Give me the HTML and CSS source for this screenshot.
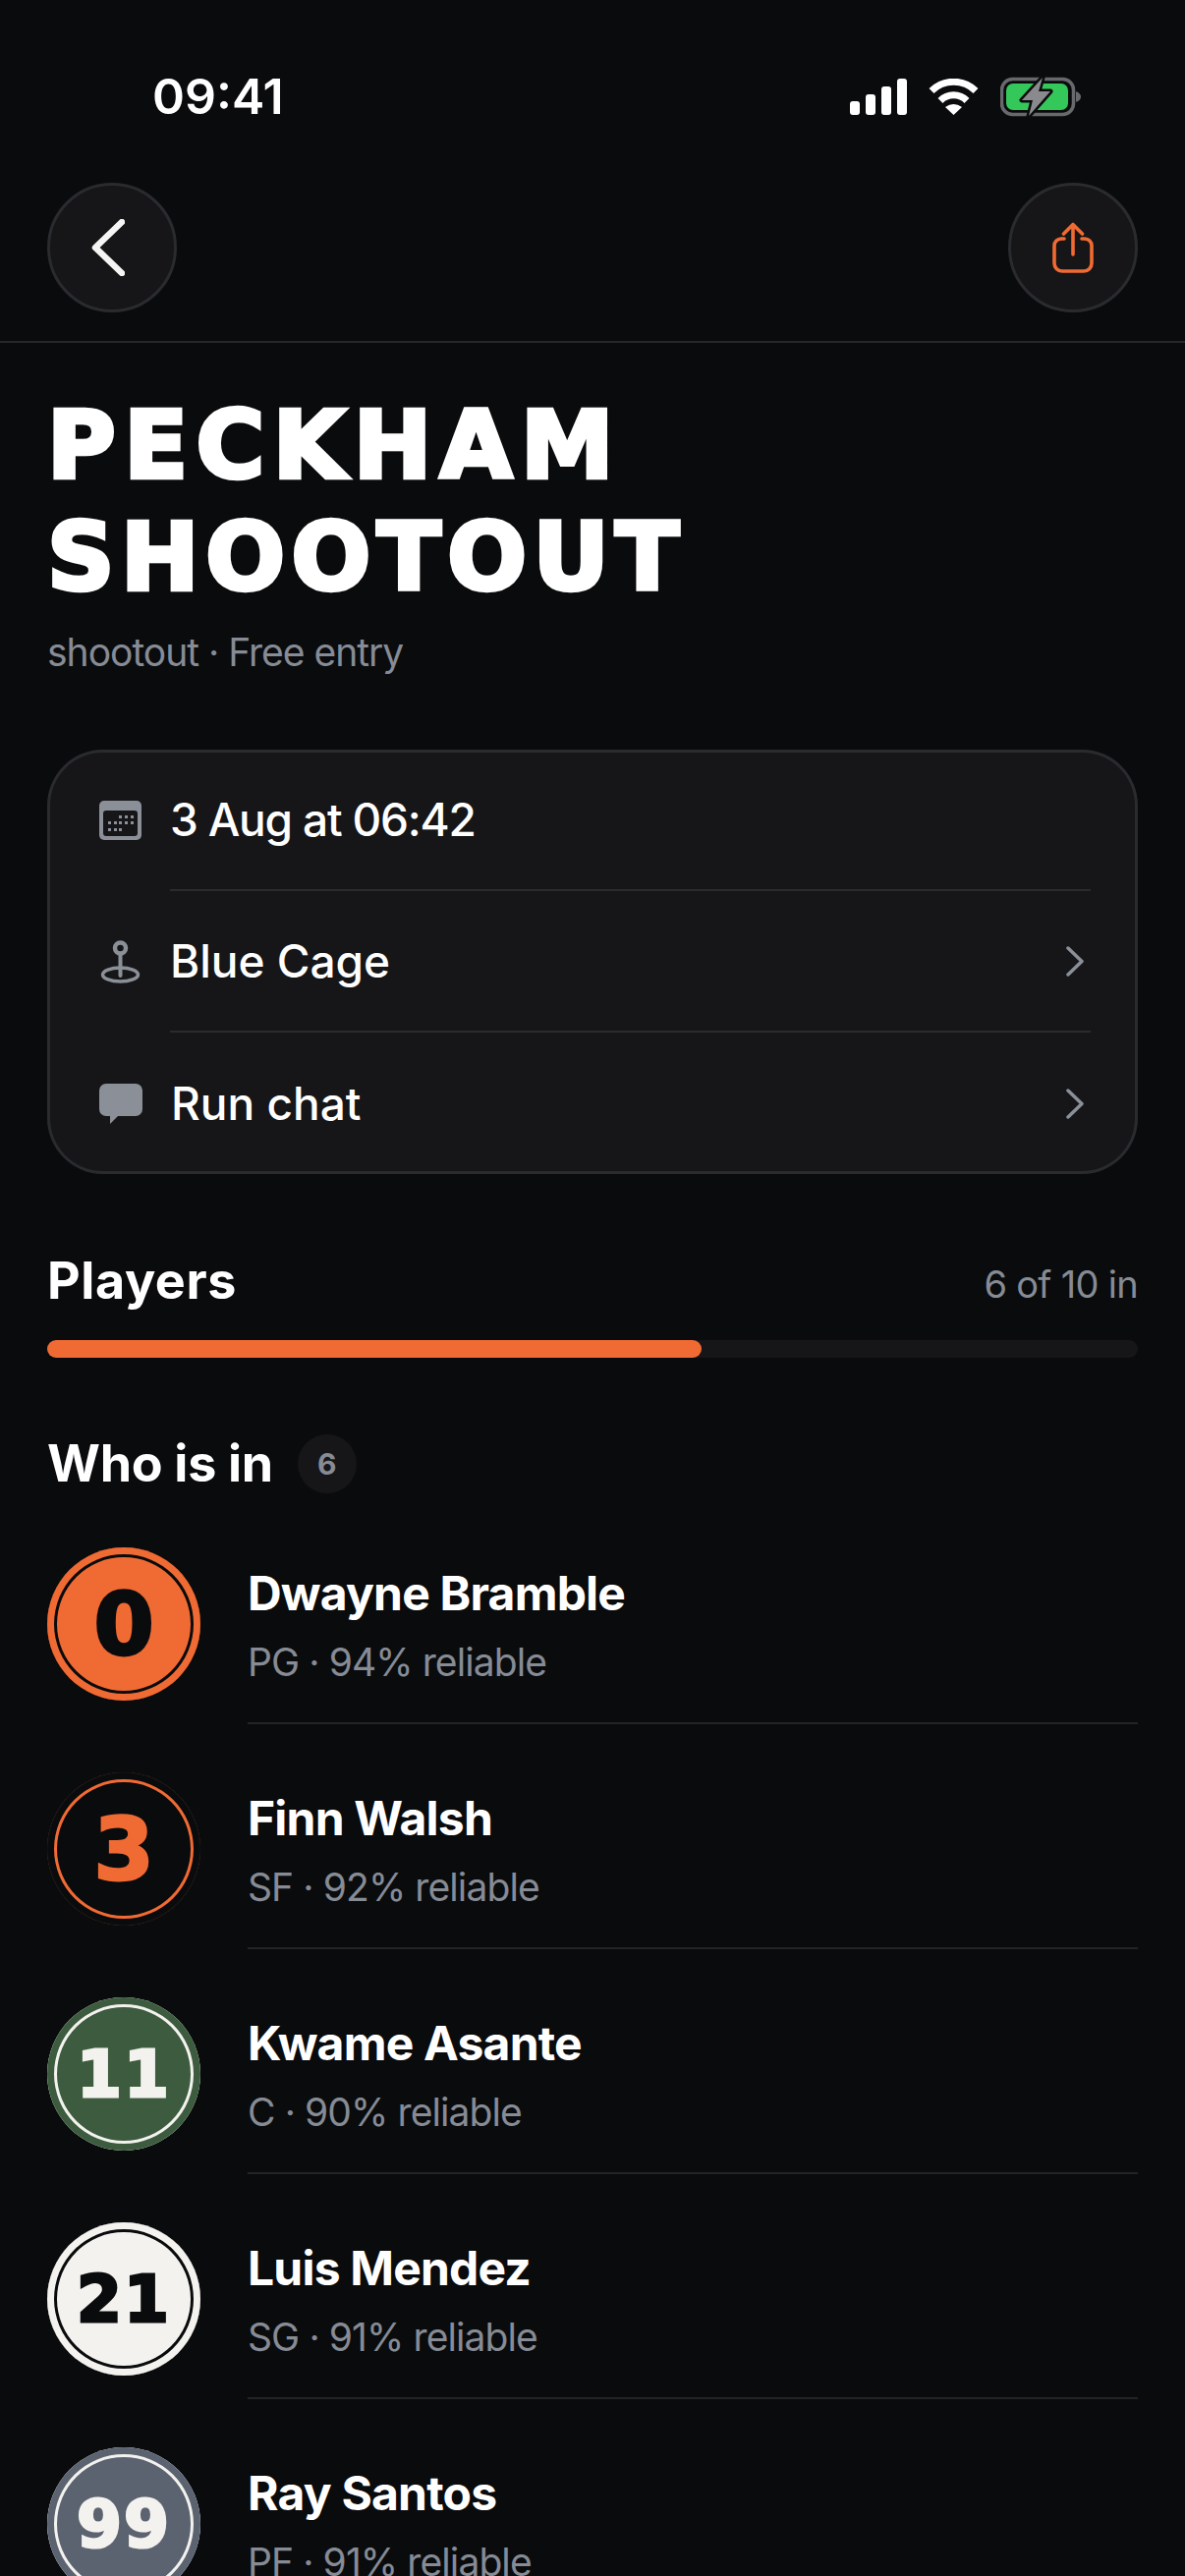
FILE: index.html
```html
<!DOCTYPE html>
<html lang="en">
<head>
<meta charset="UTF-8">
<meta name="viewport" content="width=device-width, initial-scale=1.0">
<title>Peckham Shootout</title>
<link rel="stylesheet" href="styles.css">
</head>
<body>
<div class="status">
    <div class="status-time">09:41</div>
    <div class="status-icons">
        <svg width="58" height="37" viewBox="0 0 58 37" fill="#fff">
            <rect x="0" y="23" width="10" height="14" rx="3"/>
            <rect x="16" y="16" width="10" height="21" rx="3"/>
            <rect x="32" y="8" width="10" height="29" rx="3"/>
            <rect x="48" y="0" width="10" height="37" rx="3"/>
        </svg>
        <svg width="51" height="37" viewBox="0 0 51 37">
            <path d="M3 12.500A32 32 0 0 1 48 12.500" fill="none" stroke="#fff" stroke-width="7"/>
            <path d="M12 22.500A19 19 0 0 1 39 22.500" fill="none" stroke="#fff" stroke-width="7"/>
            <path d="M17 29Q25.500 23 34 29L25.500 37Z" fill="#fff"/>
        </svg>
        <svg width="82" height="41" viewBox="0 0 82 41">
            <rect x="1.500" y="2.500" width="73" height="36" rx="11" fill="none" stroke="#68696d" stroke-width="3.500"/>
            <rect x="6" y="7" width="63" height="27" rx="7" fill="#34c759"/>
            <path d="M77 15Q82 17 82 20.500T77 26Z" fill="#68696d"/>
            <path d="M43 1L22 24H33L29 40L51 15H39Z" fill="#8a8a8e" stroke="#0a0b0d" stroke-width="5" paint-order="stroke" stroke-linejoin="round"/>
        </svg>
    </div>
</div>

<nav class="topbar">
    <button class="round-btn">
        <svg class="back-icon" width="34" height="58" viewBox="0 0 34 58" fill="none" stroke="#f5f5f3" stroke-width="6.500" stroke-linecap="round" stroke-linejoin="round"><path d="M31 3L4 29L31 55"/></svg>
    </button>
    <button class="round-btn">
        <svg width="42" height="52" viewBox="0 0 42 52" fill="none" stroke="#f06a33" stroke-width="3.600" stroke-linecap="round" stroke-linejoin="round">
            <path d="M12 17H9a7 7 0 0 0-7 7v18a8 8 0 0 0 8 8h22a8 8 0 0 0 8-8V24a7 7 0 0 0-7-7h-3"/>
            <path d="M21 33V3M11.500 12L21 2.500L30.500 12"/>
        </svg>
    </button>
</nav>

<div class="page">
    <h1 class="title"><span class="title-first">PECKHAM</span><span class="title-second">SHOOTOUT</span></h1>
    <div class="subtitle">shootout · Free entry</div>

    <div class="card">
        <div class="card-row">
            <svg class="card-icon" width="43" height="40" viewBox="0 0 43 40">
                <rect width="43" height="40" rx="5" fill="#8a8f98"/>
                <rect x="4" y="10" width="35" height="26" rx="3" fill="#161618"/>
                <g fill="#8a8f98">
                    <rect x="20" y="15" width="3" height="3"/><rect x="26" y="15" width="3" height="3"/><rect x="32" y="15" width="3" height="3"/>
                    <rect x="9" y="21" width="3" height="3"/><rect x="15" y="21" width="3" height="3"/><rect x="20" y="21" width="3" height="3"/><rect x="26" y="21" width="3" height="3"/><rect x="32" y="21" width="3" height="3"/>
                    <rect x="9" y="28" width="3" height="3"/><rect x="15" y="28" width="3" height="3"/><rect x="20" y="28" width="3" height="3"/>
                </g>
            </svg>
            <div class="card-main"><span class="date-text">3 Aug at 06:42</span></div>
        </div>
        <div class="card-row">
            <svg class="card-icon" width="43" height="44" viewBox="0 0 43 44" fill="none">
                <ellipse cx="21.500" cy="35" rx="18" ry="7" stroke="#8a8f98" stroke-width="3.500"/>
                <path d="M21.500 14V36" stroke="#8a8f98" stroke-width="4" stroke-linecap="round"/>
                <circle cx="21.500" cy="8" r="5.500" fill="#161618" stroke="#8a8f98" stroke-width="4.500"/>
            </svg>
            <div class="card-main"><span>Blue Cage</span><svg class="chev" width="18" height="31" viewBox="0 0 18 31" fill="none" stroke="#8a8f98" stroke-width="3.500" stroke-linecap="round" stroke-linejoin="round"><path d="M2 2L16 15.500L2 29"/></svg></div>
        </div>
        <div class="card-row">
            <svg class="card-icon" width="44" height="41" viewBox="0 0 44 41">
                <path d="M7 0H37a7 7 0 0 1 7 7V26a7 7 0 0 1-7 7H19L11 41V33H7a7 7 0 0 1-7-7V7a7 7 0 0 1 7-7Z" fill="#8a8f98"/>
            </svg>
            <div class="card-main"><span>Run chat</span><svg class="chev" width="18" height="31" viewBox="0 0 18 31" fill="none" stroke="#8a8f98" stroke-width="3.500" stroke-linecap="round" stroke-linejoin="round"><path d="M2 2L16 15.500L2 29"/></svg></div>
        </div>
    </div>

    <div class="players-head">
        <div class="heading">Players</div>
        <div class="players-count">6 of 10 in</div>
    </div>
    <div class="track"><div class="fill" style="width: 60%"></div></div>

    <div class="who">
        <div class="heading">Who is in</div>
        <div class="count-badge">6</div>
    </div>

    <div class="player">
        <div class="jersey jersey-orange">0</div>
        <div class="player-info"><div class="player-name">Dwayne Bramble</div><div class="player-meta">PG · 94% reliable</div></div>
    </div>
    <div class="player">
        <div class="jersey jersey-outline">3</div>
        <div class="player-info"><div class="player-name">Finn Walsh</div><div class="player-meta">SF · 92% reliable</div></div>
    </div>
    <div class="player">
        <div class="jersey jersey-green two-digit">11</div>
        <div class="player-info"><div class="player-name">Kwame Asante</div><div class="player-meta">C · 90% reliable</div></div>
    </div>
    <div class="player">
        <div class="jersey jersey-white two-digit">21</div>
        <div class="player-info"><div class="player-name">Luis Mendez</div><div class="player-meta">SG · 91% reliable</div></div>
    </div>
    <div class="player">
        <div class="jersey jersey-grey two-digit">99</div>
        <div class="player-info"><div class="player-name">Ray Santos</div><div class="player-meta">PF · 91% reliable</div></div>
    </div>
</div>
</body>
</html>
```

FILE: styles.css
```css
html, body {
    margin: 0;
    padding: 0;
    height: 2622px;
    overflow: hidden;
}
body {
    background-color: #0a0b0d;
    color: #ffffff;
    font-family: 'Inter', 'Liberation Sans', sans-serif;
}
.status {
    height: 186px;
    box-sizing: border-box;
    padding: 68px 106px 0 155px;
    display: flex;
    justify-content: space-between;
}
.status-time {
    font-size: 50px;
    font-weight: 600;
    line-height: 60px;
}
.status-icons {
    display: flex;
    align-items: center;
    gap: 22px;
    height: 60px;
}
.topbar {
    height: 163px;
    box-sizing: border-box;
    padding: 0 48px;
    display: flex;
    justify-content: space-between;
    align-items: flex-start;
    border-bottom: 2px solid #26272a;
}
.round-btn {
    width: 132px;
    height: 132px;
    padding: 0;
    border-radius: 50%;
    border: 3px solid #2a2b2f;
    background-color: #161618;
    display: flex;
    align-items: center;
    justify-content: center;
}
.back-icon {
    margin-right: 8px;
}
.page {
    padding: 47px 48px 0;
}
.title {
    margin: 0;
    font-family: 'DejaVu Sans', sans-serif;
    font-size: 95px;
    line-height: 114px;
    font-weight: 700;
    -webkit-text-stroke: 4.5px #ffffff;
}
.title-first, .title-second {
    display: block;
}
.title-first {
    letter-spacing: 8.5px;
}
.title-second {
    letter-spacing: 6.6px;
}
.subtitle {
    margin-top: 13px;
    font-size: 39px;
    line-height: 54px;
    letter-spacing: -1px;
    color: #868b95;
}
.card {
    margin-top: 72px;
    height: 432px;
    border-radius: 57px;
    background-color: #161618;
    box-shadow: inset 0 0 0 3px #2a2b2f;
}
.card-row {
    height: 144px;
    padding-left: 53px;
    display: flex;
    align-items: center;
    gap: 29px;
}
.card-icon {
    flex-shrink: 0;
}
.card-main {
    flex: 1;
    height: 100%;
    margin-right: 48px;
    padding-right: 7px;
    display: flex;
    align-items: center;
    justify-content: space-between;
    font-size: 46px;
    font-weight: 500;
    border-bottom: 2px solid #2a2b2f;
    box-sizing: border-box;
}
.card-row:last-child .card-main {
    border-bottom: none;
}
.date-text {
    letter-spacing: -1.2px;
}
.players-head {
    margin-top: 79px;
    height: 60px;
    display: flex;
    align-items: center;
    justify-content: space-between;
}
.heading {
    font-size: 52px;
    font-weight: 700;
    line-height: 60px;
}
.players-head .heading {
    letter-spacing: 0.6px;
}
.players-count {
    padding-top: 5px;
    font-size: 38px;
    letter-spacing: -0.7px;
    color: #868b95;
}
.track {
    margin-top: 30px;
    height: 18px;
    border-radius: 9px;
    background-color: #161618;
}
.fill {
    height: 100%;
    border-radius: 9px;
    background-color: #f06a33;
}
.who {
    margin-top: 78px;
    display: flex;
    align-items: center;
    gap: 25px;
}
.who .heading {
    letter-spacing: -0.3px;
}
.count-badge {
    width: 60px;
    height: 60px;
    border-radius: 50%;
    background-color: #161618;
    color: #868b95;
    font-size: 30px;
    font-weight: 700;
    display: flex;
    align-items: center;
    justify-content: center;
}
.player {
    display: flex;
    gap: 48px;
    margin-bottom: 49px;
}
.who + .player {
    margin-top: 55px;
}
.jersey {
    width: 156px;
    height: 156px;
    flex-shrink: 0;
    border-radius: 50%;
    display: flex;
    align-items: center;
    justify-content: center;
    font-family: 'DejaVu Sans', sans-serif;
    font-weight: 700;
    font-size: 88px;
    -webkit-text-stroke: 3px currentColor;
}
.two-digit {
    font-size: 66px;
    letter-spacing: 2px;
}
.jersey-orange {
    background-color: #f06a33;
    color: #0a0b0d;
    box-shadow: inset 0 0 0 7px #f06a33, inset 0 0 0 10px #0a0b0d;
}
.jersey-outline {
    background-color: #0a0b0d;
    color: #f06a33;
    box-shadow: inset 0 0 0 1px #111215, inset 0 0 0 7px #0a0b0d, inset 0 0 0 10px #f06a33;
}
.jersey-green {
    background-color: #3d5c3f;
    color: #f3f2ee;
    box-shadow: inset 0 0 0 7px #3d5c3f, inset 0 0 0 10px #f3f2ee;
}
.jersey-white {
    background-color: #f3f2ee;
    color: #0a0b0d;
    box-shadow: inset 0 0 0 7px #f3f2ee, inset 0 0 0 10px #0a0b0d;
}
.jersey-grey {
    background-color: #5c6370;
    color: #f3f2ee;
    box-shadow: inset 0 0 0 7px #5c6370, inset 0 0 0 10px #f3f2ee;
}
.player-info {
    flex: 1;
    height: 180px;
    box-sizing: border-box;
    padding-top: 20px;
    border-bottom: 2px solid #232427;
}
.player-name {
    font-size: 48px;
    font-weight: 700;
    line-height: 54px;
    letter-spacing: -0.8px;
}
.player-meta {
    margin-top: 19px;
    font-size: 39px;
    line-height: 48px;
    letter-spacing: -0.9px;
    color: #868b95;
}
```
